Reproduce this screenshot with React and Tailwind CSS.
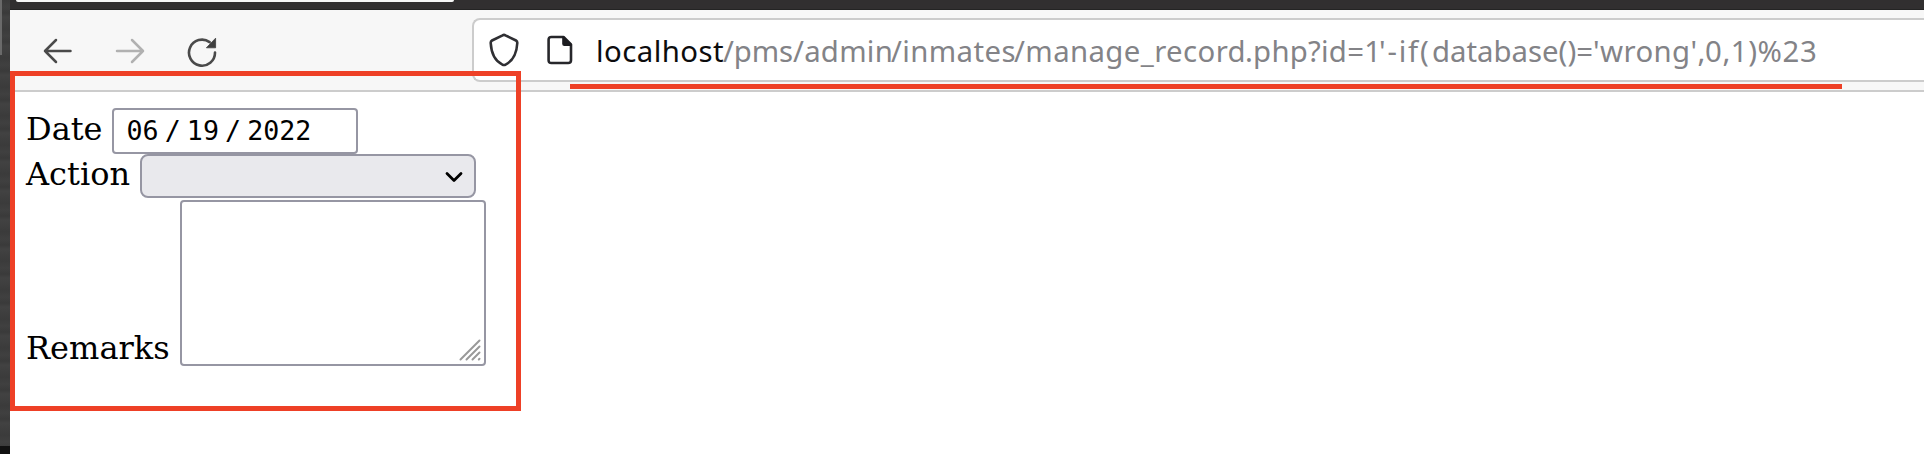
const URL_PARTS = [
  { text: 'localhost', className: 'w-[127px] tracking-[0.45px] text-[#0c0c0d]' },
  { text: '/pms', className: 'w-[70px] tracking-[-0.1px]' },
  { text: '/admin', className: 'w-[98px] tracking-[0.25px]' },
  { text: '/inmates', className: 'w-[123px] tracking-[0.4px]' },
  { text: '/manage_record', className: 'w-[231px] tracking-[0.4px]' },
  { text: '.php?id=1', className: 'w-[134px] tracking-[0.25px]' },
  { text: "'-if(", className: 'w-[53px] tracking-[1.8px]' },
  { text: 'database()=', className: 'w-[161px]' },
  { text: "'wrong',", className: 'w-[112px] tracking-[0.4px]' },
  { text: '0,1)%23', className: 'w-[115px] tracking-[0.6px]' },
];

function BackIcon() {
  return (
    <svg width="30" height="26" viewBox="0 0 30 26" fill="none" stroke="#4a4a4a" strokeWidth="2.5" strokeLinecap="round" strokeLinejoin="round">
      <path d="M27.5 13H2M13 2L2 13L13 24" />
    </svg>
  );
}

function ForwardIcon() {
  return (
    <svg width="30" height="26" viewBox="0 0 30 26" fill="none" stroke="#b1b1b1" strokeWidth="2.5" strokeLinecap="round" strokeLinejoin="round">
      <path d="M2 13H28M17 2L28 13L17 24" />
    </svg>
  );
}

function ReloadIcon() {
  return (
    <svg width="30" height="30" viewBox="0 0 30 30" fill="none">
      <path d="M28 15.5A13 13 0 1 1 22.6 5.1" stroke="#4a4a4a" strokeWidth="2.6" strokeLinecap="round" />
      <path d="M28.6 1.2V10.8H19.4Z" fill="#3f3f3f" stroke="#3f3f3f" strokeWidth="0.8" strokeLinejoin="round" />
    </svg>
  );
}

function ShieldIcon() {
  return (
    <svg width="30" height="34" viewBox="0 0 30 34" fill="none" stroke="#2f2f33" strokeWidth="2.6" strokeLinejoin="round">
      <path d="M13.6 2.3Q15 1.4 16.4 2.3L27 7.5Q28.4 8.3 28.3 10C27.7 20.5 24 28 16.6 31.6Q15 32.5 13.4 31.6C6 28 2.3 20.5 1.7 10Q1.6 8.3 3 7.5Z" />
    </svg>
  );
}

function PageIcon() {
  return (
    <svg width="26" height="30" viewBox="0 0 26 30" fill="none">
      <path d="M4.4 2H16.5L24 9.5V25.2Q24 28 21.2 28H4.4Q1.6 28 1.6 25.2V4.8Q1.6 2 4.4 2Z" stroke="#27272b" strokeWidth="2.6" strokeLinejoin="round" />
      <path d="M15.2 1.5H17L24.5 9V11H17.4Q15.2 11 15.2 8.8Z" fill="#1c1c20" />
    </svg>
  );
}

function Toolbar() {
  return (
    <div className="flex h-[82px] shrink-0 border-b-2 border-[#cccccc] bg-[#f7f7f7] pt-2">
      <div className="flex h-[66px] w-[462px] shrink-0 items-center gap-[42px] pl-[33px]">
        <BackIcon />
        <ForwardIcon />
        <div className="pt-0.5">
          <ReloadIcon />
        </div>
      </div>
      <div className="flex h-[64px] grow items-center overflow-hidden rounded-l-lg border-2 border-r-0 border-[#cccccc] bg-white pl-[15px]">
        <ShieldIcon />
        <div className="pl-[28px]">
          <PageIcon />
        </div>
        <div className="flex pt-0.5 pl-[23px] font-['Noto_Sans',sans-serif] text-[29.33px] leading-[40px] whitespace-nowrap text-[#838387]">
          {URL_PARTS.map((part) => (
            <span key={part.text} className={`shrink-0 ${part.className}`}>
              {part.text}
            </span>
          ))}
        </div>
      </div>
    </div>
  );
}

function RecordForm() {
  return (
    <div className="flex flex-col pt-4 pl-4 font-['DejaVu_Serif',serif] text-[32px] leading-[38px] text-black">
      <div className="flex h-[46px]">
        <span className="w-[86px] pt-[2px]">Date</span>
        <div className="flex h-[46px] w-[246px] items-center gap-[6.1px] rounded-[4px] border-2 border-[#9696a3] bg-white pl-[12.5px] font-['DejaVu_Sans_Mono',monospace] text-[26.67px] leading-[30px]">
          <span>06</span>
          <span>/</span>
          <span>19</span>
          <span>/</span>
          <span>2022</span>
        </div>
      </div>
      <div className="flex h-[46px]">
        <span className="w-[114px] pt-px">Action</span>
        <div className="flex h-[44px] w-[336px] items-center justify-end rounded-lg border-2 border-[#9696a3] bg-[#e9e9ed] pt-px pr-[10px]">
          <svg width="20" height="14" viewBox="0 0 20 14" fill="none" stroke="#000" strokeWidth="2.8" strokeLinecap="round" strokeLinejoin="round">
            <path d="M3 3.5L10 10.5L17 3.5" />
          </svg>
        </div>
      </div>
      <div className="flex h-[166px] items-end">
        <span className="w-[154px] leading-[36px]">Remarks</span>
        <div className="flex h-[166px] w-[306px] items-end justify-end rounded-[4px] border-2 border-[#9696a3] bg-white pr-[3px] pb-[3px]">
          <svg width="22" height="22" viewBox="0 0 22 22" fill="none" stroke="#999999" strokeWidth="2" strokeLinecap="round">
            <path d="M1.5 20.5L20.5 1.5M7.5 20.5L20.5 7.5M13.5 20.5L20.5 13.5M19.8 20.5L20.5 19.8" />
          </svg>
        </div>
      </div>
    </div>
  );
}

export default function App() {
  return (
    <div className="relative flex h-[454px] w-full overflow-hidden bg-white">
      <div className="flex w-[10px] shrink-0 flex-col bg-[repeating-linear-gradient(180deg,#3b3b3b_0px,#404040_7px,#3a3a3a_13px,#424242_17px,#3b3b3b_29px)]">
        <div className="h-[55px] w-[2px] bg-[#6a6a6a]" />
        <div className="grow" />
        <div className="h-[8px] bg-[#111111]" />
      </div>
      <div className="flex min-w-0 grow flex-col">
        <div className="h-[10px] shrink-0 border-b border-[#242424] bg-[#312f30] pl-[6px]">
          <div className="h-[2px] w-[438px] rounded-b-[2px] bg-[#f7f7f7]" />
        </div>
        <Toolbar />
        <RecordForm />
      </div>
      <div className="absolute top-[71px] left-[10px] h-[340px] w-[511px] border-5 border-[#ee4026]" />
      <div className="absolute top-[84px] left-[570px] h-[5px] w-[1272px] bg-[#ee4026]" />
    </div>
  );
}
